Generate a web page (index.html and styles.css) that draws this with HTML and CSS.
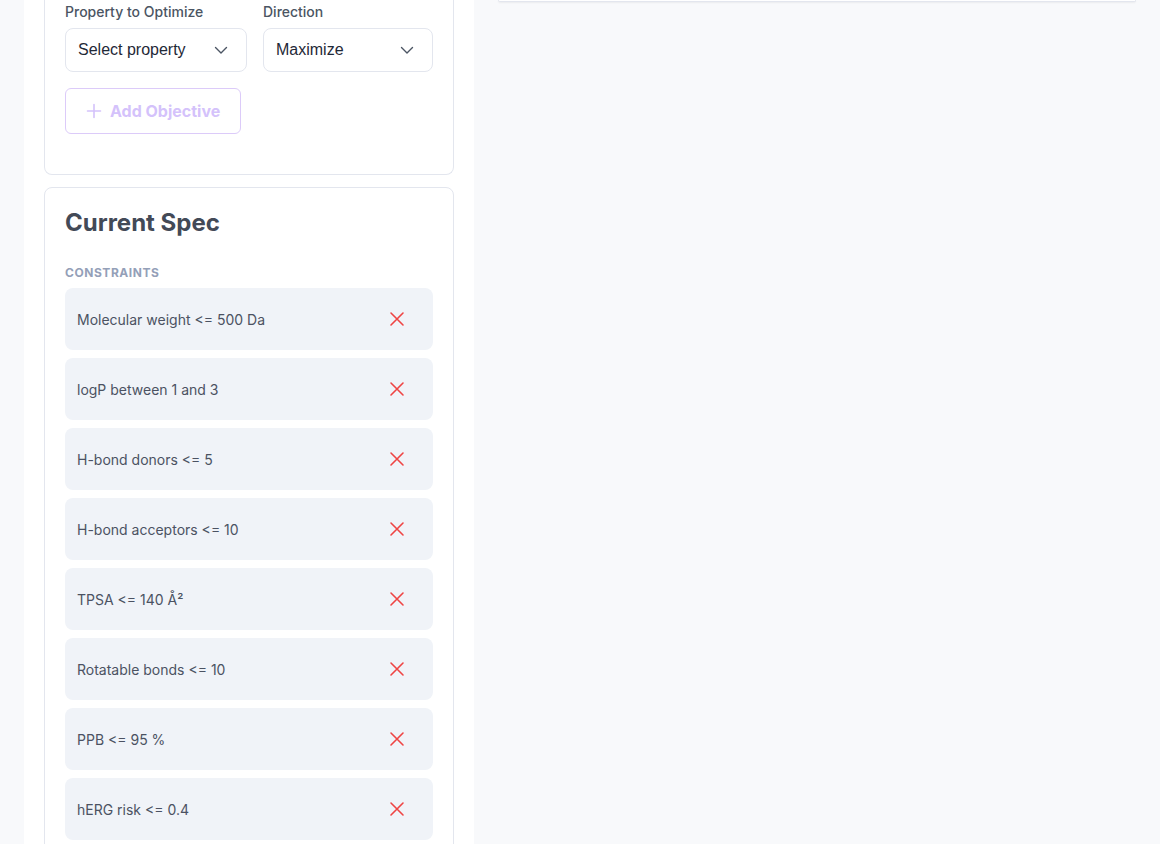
FILE: index.html
```html
<!DOCTYPE html>
<html lang="en">
<head>
    <meta charset="UTF-8">
    <meta name="viewport" content="width=device-width, initial-scale=1.0">
    <title>Optimization Spec</title>
    <link rel="stylesheet" href="styles.css">
</head>
<body>
    <div class="layout">
        <aside class="sidebar">
            <div class="card card-cut">
                <div class="field-row">
                    <div class="field">
                        <label for="prop">Property to Optimize</label>
                        <div class="select" id="prop">
                            <span>Select property</span>
                            <svg width="16" height="16" viewBox="0 0 16 16" fill="none" stroke="#4b5563" stroke-width="1.4" stroke-linecap="round" stroke-linejoin="round"><path d="M2.5 5.5 8 11l5.5-5.5"/></svg>
                        </div>
                    </div>
                    <div class="field">
                        <label for="dir">Direction</label>
                        <div class="select" id="dir">
                            <span>Maximize</span>
                            <svg width="16" height="16" viewBox="0 0 16 16" fill="none" stroke="#4b5563" stroke-width="1.4" stroke-linecap="round" stroke-linejoin="round"><path d="M2.5 5.5 8 11l5.5-5.5"/></svg>
                        </div>
                    </div>
                </div>
                <button class="btn-add" disabled>
                    <svg width="16" height="16" viewBox="0 0 16 16" fill="none" stroke="currentColor" stroke-width="1.6" stroke-linecap="round"><path d="M8 1.5v13M1.5 8h13"/></svg>
                    Add Objective
                </button>
            </div>

            <div class="card">
                <h2>Current Spec</h2>
                <div class="section-title">Constraints</div>
                <ul class="spec-list">
                    <li><span>Molecular weight &lt;= 500 Da</span><button class="remove"><svg width="16" height="16" viewBox="0 0 16 16" fill="none" stroke="currentColor" stroke-width="1.6" stroke-linecap="round"><path d="M2 2l12 12M14 2 2 14"/></svg></button></li>
                    <li><span>logP between 1 and 3</span><button class="remove"><svg width="16" height="16" viewBox="0 0 16 16" fill="none" stroke="currentColor" stroke-width="1.6" stroke-linecap="round"><path d="M2 2l12 12M14 2 2 14"/></svg></button></li>
                    <li><span>H-bond donors &lt;= 5</span><button class="remove"><svg width="16" height="16" viewBox="0 0 16 16" fill="none" stroke="currentColor" stroke-width="1.6" stroke-linecap="round"><path d="M2 2l12 12M14 2 2 14"/></svg></button></li>
                    <li><span>H-bond acceptors &lt;= 10</span><button class="remove"><svg width="16" height="16" viewBox="0 0 16 16" fill="none" stroke="currentColor" stroke-width="1.6" stroke-linecap="round"><path d="M2 2l12 12M14 2 2 14"/></svg></button></li>
                    <li><span>TPSA &lt;= 140 Å²</span><button class="remove"><svg width="16" height="16" viewBox="0 0 16 16" fill="none" stroke="currentColor" stroke-width="1.6" stroke-linecap="round"><path d="M2 2l12 12M14 2 2 14"/></svg></button></li>
                    <li><span>Rotatable bonds &lt;= 10</span><button class="remove"><svg width="16" height="16" viewBox="0 0 16 16" fill="none" stroke="currentColor" stroke-width="1.6" stroke-linecap="round"><path d="M2 2l12 12M14 2 2 14"/></svg></button></li>
                    <li><span>PPB &lt;= 95 %</span><button class="remove"><svg width="16" height="16" viewBox="0 0 16 16" fill="none" stroke="currentColor" stroke-width="1.6" stroke-linecap="round"><path d="M2 2l12 12M14 2 2 14"/></svg></button></li>
                    <li><span>hERG risk &lt;= 0.4</span><button class="remove"><svg width="16" height="16" viewBox="0 0 16 16" fill="none" stroke="currentColor" stroke-width="1.6" stroke-linecap="round"><path d="M2 2l12 12M14 2 2 14"/></svg></button></li>
                </ul>
            </div>
        </aside>

        <main class="content">
            <div class="panel-cut"></div>
        </main>
    </div>
</body>
</html>
```

FILE: styles.css
```css
body {
    font-family: Inter, "Noto Sans", sans-serif;
    margin: 0;
    padding: 0;
    background-color: #f8f9fb;
    color: #374151;
    height: 844px;
    overflow: hidden;
}

.layout {
    display: flex;
    padding-left: 24px;
    height: 100%;
}

.sidebar {
    width: 450px;
    background-color: #ffffff;
    padding: 0 20px;
    box-sizing: border-box;
    display: flex;
    flex-direction: column;
    gap: 12px;
}

.card {
    background-color: #ffffff;
    border: 1px solid #e3e6ee;
    border-radius: 8px;
    padding: 20px;
}

/* top of this card is scrolled out of view */
.card-cut {
    border-top: none;
    border-radius: 0 0 8px 8px;
    padding-top: 2px;
    padding-bottom: 40px;
}

.field-row {
    display: grid;
    grid-template-columns: 182px 170px;
    gap: 16px;
}

.field label {
    display: block;
    font-size: 14px;
    font-weight: 500;
    line-height: 20px;
    color: #4b5563;
    margin-bottom: 6px;
}

.select {
    height: 44px;
    box-sizing: border-box;
    border: 1px solid #e3e6ee;
    border-radius: 8px;
    padding: 0 17px 0 12px;
    display: flex;
    align-items: center;
    justify-content: space-between;
    font-family: "Liberation Sans", Arial, sans-serif;
    font-size: 16px;
    color: #1f2937;
}

.btn-add {
    margin-top: 16px;
    height: 46px;
    padding: 0 20px;
    display: flex;
    align-items: center;
    gap: 8px;
    background: #ffffff;
    border: 1px solid #dccbf9;
    border-radius: 6px;
    color: #d4c2fb;
    font-family: inherit;
    font-size: 16px;
    font-weight: 700;
}

h2 {
    margin: 0;
    font-size: 24px;
    line-height: 30px;
    font-weight: 700;
    color: #434a57;
}

.section-title {
    margin-top: 27px;
    margin-bottom: 8px;
    font-size: 12px;
    font-weight: 700;
    text-transform: uppercase;
    color: #94a0b8;
    letter-spacing: 0.55px;
}

.spec-list {
    list-style: none;
    margin: 0;
    padding: 0;
    display: flex;
    flex-direction: column;
    gap: 8px;
}

.spec-list li {
    height: 62px;
    background-color: #f0f3f8;
    border-radius: 8px;
    padding: 0 12px;
    display: flex;
    align-items: center;
    justify-content: space-between;
    font-size: 14px;
    color: #4b5262;
}

.remove {
    width: 48px;
    height: 38px;
    border: none;
    background: none;
    color: #ef4444;
    display: flex;
    align-items: center;
    justify-content: center;
    padding: 0;
}

.content {
    flex: 1;
    padding: 0 24px;
}

/* bottom edge of a card scrolled out of view */
.panel-cut {
    height: 1px;
    background: #ffffff;
    border: 1px solid #e3e6ee;
    border-top: none;
    border-radius: 0 0 8px 8px;
    box-shadow: 0 1px 2px rgba(0, 0, 0, 0.06);
}
```
